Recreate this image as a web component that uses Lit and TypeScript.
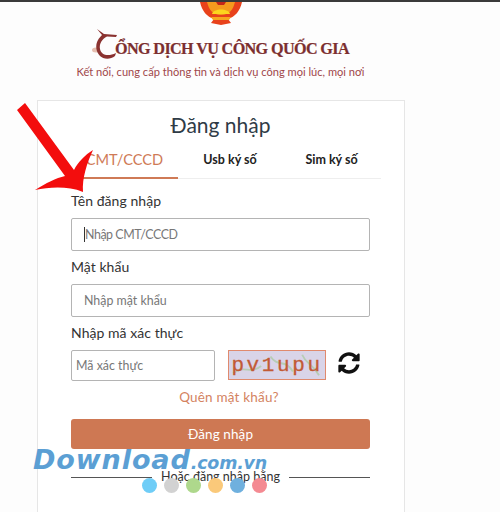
import { LitElement, html, css } from "lit";
import { customElement } from "lit/decorators.js";

@customElement("app-root")
export class AppRoot extends LitElement {
  static styles = css`
    :host { display: block; position: relative; width: 500px; height: 512px; overflow: hidden; background: #fdfdfd; font-family: "Lato", "Open Sans", sans-serif; color: #333; }
    .top { height: 2px; background: #3a3a3a; }
    .head { width: 442px; height: 98px; display: flex; flex-direction: column; align-items: center; }
    .emblem { width: 44px; height: 23px; display: block; margin-left: -1px; }
    .brand { display: flex; align-items: flex-end; height: 32px; margin-top: 3px; margin-left: -1px; }
    .brand svg { width: 28px; height: 32px; margin-right: -5px; }
    .brand span { font-family: "Liberation Serif", serif; font-weight: 700; font-size: 16.2px; color: #7c2f2f; line-height: 22px; letter-spacing: -0.65px; white-space: nowrap; -webkit-text-stroke: 0.2px #7c2f2f; }
    .sub { font-size: 11.1px; color: #a0474a; line-height: 16px; margin-top: 4px; margin-left: -1px; white-space: nowrap; }
    .card { width: 368px; margin-left: 37px; height: 420px; box-sizing: border-box; background: #fff; border: 1px solid #e6e6e6; border-bottom: 0; padding: 0 34px 0 33px; }
    h1 { margin: 10px 0 0; font-size: 21px; font-weight: 400; line-height: 28px; text-align: center; color: #2f3b46; }
    .tabs { display: grid; grid-template-columns: 107px 104px 1fr; height: 40px; box-sizing: border-box; border-bottom: 1px solid #eee; margin-right: -11px; }
    .tab { display: flex; align-items: center; justify-content: center; font-size: 12.5px; font-weight: 700; color: #222; padding-top: 2px; }
    .tab.active { color: #cf7a56; font-weight: 400; font-size: 14.6px; border-bottom: 2px solid #cf7a56; margin-bottom: -1px; }
    label { display: block; font-size: 14px; line-height: 18px; color: #333; letter-spacing: 0.05px; }
    .l1 { margin-top: 13px; }
    .l2, .l3 { margin-top: 7px; }
    .inp { height: 33px; box-sizing: border-box; border: 1px solid #b4b4b4; border-radius: 2px; margin-top: 8px; display: flex; align-items: center; padding-left: 12px; font-size: 12.4px; color: #777; white-space: nowrap; background: #fff; }
    .tight { letter-spacing: -0.45px; }
    .caret { width: 1px; height: 15px; background: #333; }
    .cap { display: flex; align-items: flex-start; margin-top: 8px; }
    .inp.code { width: 144px; height: 31px; margin-top: 0; padding-left: 4px; }
    .capimg { position: relative; width: 98px; height: 30px; box-sizing: border-box; margin-left: 13px; border: 1px solid #e08a6e; background: #d9d4e8; color: #c25a35; font-family: "Liberation Mono", monospace; font-size: 21px; letter-spacing: 2.6px; -webkit-text-stroke: 0.3px #c25a35; display: flex; align-items: center; justify-content: center; line-height: 1; overflow: hidden; }
    .capimg span { position: relative; }
    .noise { position: absolute; inset: 0; width: 100%; height: 100%; }
    .refresh { width: 22px; height: 22px; margin-left: 12px; margin-top: 2px; }
    .forgot { text-align: center; font-size: 13.5px; color: #d4835f; line-height: 18px; margin-top: 7px; padding-left: 17px; letter-spacing: 0.2px; }
    .btn { height: 30px; margin-top: 13px; border-radius: 3px; background: #ce7853; color: #fff; display: flex; align-items: center; justify-content: center; font-size: 13.5px; letter-spacing: 0.1px; }
    .or { display: flex; align-items: center; margin-top: 20px; gap: 9px; font-size: 12.5px; line-height: 16px; color: #333; white-space: nowrap; }
    .or i { flex: 1; height: 1px; background: #555; margin-top: 1px; }
    .arrow { position: absolute; left: 0; top: 95px; width: 100px; height: 105px; }
    .mark { position: absolute; left: 33px; top: 446px; display: flex; align-items: baseline; font-family: "DejaVu Sans", sans-serif; font-style: italic; font-weight: 700; color: #5b9fd4; line-height: 28px; white-space: nowrap; }
    .mark b { font-size: 27px; letter-spacing: 0.9px; }
    .mark span { font-size: 17.5px; letter-spacing: -0.2px; }
    .dots { position: absolute; left: 142px; top: 478px; display: flex; gap: 7px; }
    .dots i { width: 15px; height: 15px; border-radius: 50%; }
  `;

  render() {
    const dots = ["#6fcdf7", "#d2d2d2", "#aed88c", "#fac97a", "#6fb0de", "#f48a92"];
    return html`
      <div class="top"></div>
      <div class="head">
        <svg class="emblem" viewBox="0 0 44 23">
          <path d="M1 0 H43 C41 9 36 15 29 17 L32 21 L22 23 L12 21 L15 17 C8 15 3 9 1 0Z" fill="#e8421b"/>
          <path d="M8 0 H36 C34 8 30 13 22 13 C14 13 10 8 8 0Z" fill="#f59a1e"/>
          <path d="M13 12 C14 6 30 6 31 12 Z" fill="#fcd51e"/>
          <path d="M12 15 H32 L30 18 H14 Z" fill="#f7a51f"/>
          <path d="M17 0 H27 L25 3 H19Z" fill="#c4261a"/>
        </svg>
        <div class="brand">
          <svg viewBox="92 27 28 32">
            <ellipse cx="96" cy="49" rx="4" ry="2.5" fill="#e6bfb0"/>
            <path d="M97 28 L104 33 L117 34 L116 36 L107 35.500 C102 38 99 43 100 48 C101 54 108 56 116 52 L115 55 C110 59 103 58 100 55 C96 51 95 44 98 39 C99 37 101 35 102 34 Z" fill="#8a3230"/>
          </svg>
          <span>ỔNG DỊCH VỤ CÔNG QUỐC GIA</span>
        </div>
        <div class="sub">Kết nối, cung cấp thông tin và dịch vụ công mọi lúc, mọi nơi</div>
      </div>
      <div class="card">
        <h1>Đăng nhập</h1>
        <div class="tabs">
          <div class="tab active">CMT/CCCD</div>
          <div class="tab">Usb ký số</div>
          <div class="tab">Sim ký số</div>
        </div>
        <label class="l1">Tên đăng nhập</label>
        <div class="inp"><span class="caret"></span><span class="tight">Nhập CMT/CCCD</span></div>
        <label class="l2">Mật khẩu</label>
        <div class="inp">Nhập mật khẩu</div>
        <label class="l3">Nhập mã xác thực</label>
        <div class="cap">
          <div class="inp code">Mã xác thực</div>
          <div class="capimg">
            <svg class="noise" viewBox="0 0 98 30">
              <path d="M2 24 C14 14 20 26 32 16 M42 6 C50 18 58 8 66 22 M76 4 C80 14 86 12 94 26" fill="none" stroke="#b7cdb5" stroke-width="2"/>
            </svg>
            <span>pv1upu</span>
          </div>
          <svg class="refresh" viewBox="0 0 512 512"><path fill="#111" d="M370.700 133.300C339.500 104 298.900 88 255.800 88c-77.500.1-144.300 53.200-162.800 126.900-1.300 5.400-6.100 9.200-11.700 9.200H24.100c-7.500 0-13.200-6.800-11.800-14.200C33.900 94.900 134.800 8 256 8c66.400 0 126.800 26.100 171.300 68.700L463 41C478.100 25.900 504 36.600 504 57.900V192c0 13.300-10.700 24-24 24H345.900c-21.400 0-32.100-25.900-17-41zM32 296h134.100c21.400 0 32.100 25.900 17 41l-41.800 41.800c31.300 29.300 71.800 45.300 114.900 45.200 77.400-.1 144.300-53.100 162.800-126.800 1.300-5.400 6.100-9.200 11.700-9.200h57.300c7.500 0 13.200 6.800 11.800 14.200C478.100 417.100 377.200 504 256 504c-66.400 0-126.800-26.100-171.300-68.700L49 471C33.900 486.100 8 475.400 8 454.100V320c0-13.300 10.700-24 24-24z"/></svg>
        </div>
        <div class="forgot">Quên mật khẩu?</div>
        <div class="btn">Đăng nhập</div>
        <div class="or"><i></i><span>Hoặc đăng nhập bằng</span><i></i></div>
      </div>
      <svg class="arrow" viewBox="0 95 100 105">
        <path d="M17 110 L25 103 L74 170 C78 162 85 155 93 150 C87 163 82 178 83 192 C68 186 50 187 35 190 C46 183 56 178 65 176 Z" fill="#f30d0d"/>
      </svg>
      <div class="mark"><b>Download</b><span>.com.vn</span></div>
      <div class="dots">${dots.map((c) => html`<i style="background:${c}"></i>`)}</div>
    `;
  }
}
